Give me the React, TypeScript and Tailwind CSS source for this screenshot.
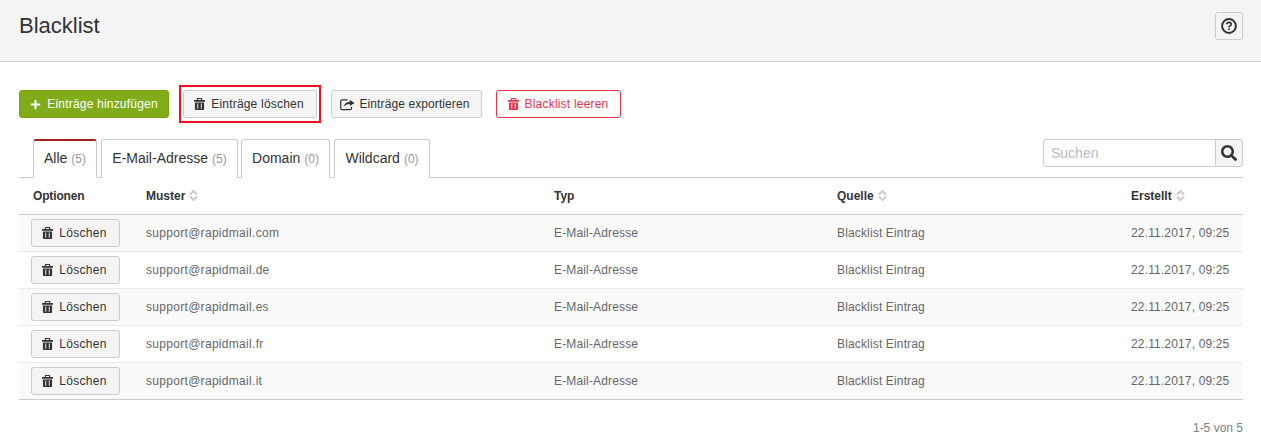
import React from "react";
import { FaPlus, FaSearch } from "react-icons/fa";

const Trash = ({ className = "" }: { className?: string }) => (
  <svg viewBox="0 0 12 13" className={className} fill="currentColor" aria-hidden="true">
    <path d="M4 0h4a1 1 0 0 1 1 1V2h2.5a.5.5 0 0 1 .5.5V4H0V2.5A.5.5 0 0 1 .5 2H3V1a1 1 0 0 1 1-1zM4.3 1.1V2h3.4v-.9z" fillRule="evenodd" />
    <path d="M1 4.8h10V12a1 1 0 0 1-1 1H2a1 1 0 0 1-1-1zM3.6 6v5.6h1V6zM7.4 6v5.6h1V6z" fillRule="evenodd" />
  </svg>
);

const Share = () => (
  <svg viewBox="0 0 16 13" className="w-[15px] h-[13px] text-[#333]" aria-hidden="true">
    <path d="M8 1.5H2A1.2 1.2 0 0 0 .8 2.7v8.1A1.2 1.2 0 0 0 2 12h9a1.2 1.2 0 0 0 1.2-1.2V9" fill="none" stroke="currentColor" strokeWidth="1.3" />
    <path d="M10.5 1.5 15.5 4.8 10.5 8V6C7.5 6 5.5 6.8 4 9.2 4.3 5.8 6.8 3.7 10.5 3.5z" fill="currentColor" />
  </svg>
);

const Help = () => (
  <svg viewBox="0 0 16 16" className="w-[16px] h-[16px] text-[#333]" fill="none" stroke="currentColor" aria-hidden="true">
    <circle cx="8" cy="8" r="6.9" strokeWidth="2" />
    <path d="M5.8 6.3C5.9 5 6.8 4.4 8 4.4c1.3 0 2.2.7 2.2 1.8 0 1.7-2.2 1.6-2.2 3.2" strokeWidth="1.7" />
    <path d="M8 10.4v1.7" strokeWidth="1.8" />
  </svg>
);

const Sort = () => (
  <svg viewBox="0 0 9 13" className="w-[9px] h-[13px] text-[#cccccc] ml-[4px]" fill="none" stroke="currentColor" strokeWidth="2.2" aria-hidden="true">
    <path d="M1 5.5 4.5 2 8 5.5" />
    <path d="M1 7.5 4.5 11 8 7.5" />
  </svg>
);

const tabs = [
  { label: "Alle", count: 5, w: "w-[64px]", active: true },
  { label: "E-Mail-Adresse", count: 5, w: "w-[137px]" },
  { label: "Domain", count: 0, w: "w-[89px] -ml-px" },
  { label: "Wildcard", count: 0, w: "w-[96px]" },
];

const rows = ["com", "de", "es", "fr", "it"];

export default function App() {
  return (
    <div className="w-[1261px] h-[448px] bg-white overflow-hidden text-[#333] font-['Liberation_Sans',Arial,sans-serif]">
      <header className="h-[62px] bg-[#f4f4f4] border-b border-[#cccccc] pl-[19px] pr-[18px] flex items-start justify-between">
        <h1 className="text-[22px] leading-[25px] mt-[13px] font-normal">Blacklist</h1>
        <button className="mt-[12px] w-[28px] h-[28px] rounded-[3px] border border-[#cccccc] bg-[#f4f4f4] flex items-center justify-center">
          <Help />
        </button>
      </header>

      <div className="pl-[19px] pt-[23px] flex items-center text-[12px] tracking-[0.2px]">
        <button className="w-[150px] h-[28px] rounded-[3px] bg-[#7fac18] border border-[#77a214] text-white flex items-center justify-center gap-[6px]">
          <FaPlus className="w-[11px] h-[11px]" />
          <span>Einträge hinzufügen</span>
        </button>
        <div className="ml-[10px] border-2 border-[#ee1122] px-[2px] py-[3px]">
          <button className="w-[134px] h-[28px] rounded-[3px] bg-[#f4f4f4] border border-[#cccccc] flex items-center justify-center gap-[6px] pr-[2px]">
            <Trash className="w-[11px] h-[12px] text-[#333]" />
            <span>Einträge löschen</span>
          </button>
        </div>
        <button className="ml-[10px] w-[151px] h-[28px] rounded-[3px] bg-[#f4f4f4] border border-[#cccccc] flex items-center justify-center gap-[4px] tracking-[0.1px] pr-[3px]">
          <Share />
          <span>Einträge exportieren</span>
        </button>
        <button className="ml-[14px] w-[125px] h-[28px] rounded-[3px] bg-white border border-[#e2364c] text-[#e2364c] flex items-center justify-center gap-[6px] pr-[1px]">
          <Trash className="w-[11px] h-[12px]" />
          <span>Blacklist leeren</span>
        </button>
      </div>

      <div className="mt-[16px] ml-[19px] w-[1224px] h-[39px] border-b border-[#cccccc] flex justify-between">
        <div className="flex pl-[14px] gap-[4px]">
          {tabs.map((t) => (
            <div
              key={t.label}
              className={`${t.w} h-[39px] rounded-t-[3px] bg-white border-x border-[#cccccc] flex items-center justify-center text-[14px] pb-[1px] ${
                t.active ? "border-t-2 border-t-[#a3201f] border-b border-b-white" : "border-t"
              }`}
            >
              <span>{t.label}</span>
              <span className="ml-[4px] text-[12px] text-[#999999]">({t.count})</span>
            </div>
          ))}
        </div>
        <div className="flex w-[200px] h-[28px]">
          <div className="flex-1 border border-[#cccccc] rounded-l-[3px] pl-[7px] text-[14px] leading-[26px] text-[#bbbbbb]">Suchen</div>
          <button className="w-[28px] h-[28px] -ml-px border border-[#cccccc] rounded-r-[3px] bg-[#f4f4f4] flex items-center justify-center">
            <FaSearch className="w-[16px] h-[16px] text-[#333]" />
          </button>
        </div>
      </div>

      <table className="ml-[19px] w-[1224px] table-fixed border-collapse text-[12px]">
        <thead>
          <tr className="h-[36px] border-b border-[#cccccc] font-bold text-left">
            <th className="w-[127px] pl-[14px] font-bold tracking-[-0.15px]">Optionen</th>
            <th className="w-[408px]">
              <span className="flex items-center">Muster<Sort /></span>
            </th>
            <th className="w-[283px] font-bold">Typ</th>
            <th className="w-[294px]">
              <span className="flex items-center">Quelle<Sort /></span>
            </th>
            <th>
              <span className="flex items-center">Erstellt<Sort /></span>
            </th>
          </tr>
        </thead>
        <tbody className="text-[#666666] tracking-[0.15px]">
          {rows.map((tld, i) => (
            <tr key={tld} className={`h-[37px] border-b ${i === rows.length - 1 ? "border-[#cccccc]" : "border-[#e9e9e9]"} ${i % 2 === 0 ? "bg-[#fafafa]" : "bg-white"}`}>
              <td className="pl-[12px]">
                <button className="w-[89px] h-[28px] rounded-[3px] bg-[#f4f4f4] border border-[#cccccc] text-[#333] flex items-center justify-center gap-[6px] tracking-[0.3px] pr-[2px]">
                  <Trash className="w-[11px] h-[12px] text-[#333]" />
                  <span>Löschen</span>
                </button>
              </td>
              <td className="tracking-[0.3px]">support@rapidmail.{tld}</td>
              <td>E-Mail-Adresse</td>
              <td>Blacklist Eintrag</td>
              <td>22.11.2017, 09:25</td>
            </tr>
          ))}
        </tbody>
      </table>

      <div className="mt-[21px] pr-[18px] text-right text-[12px] leading-[14px] text-[#808080]">1-5 von 5</div>
    </div>
  );
}
